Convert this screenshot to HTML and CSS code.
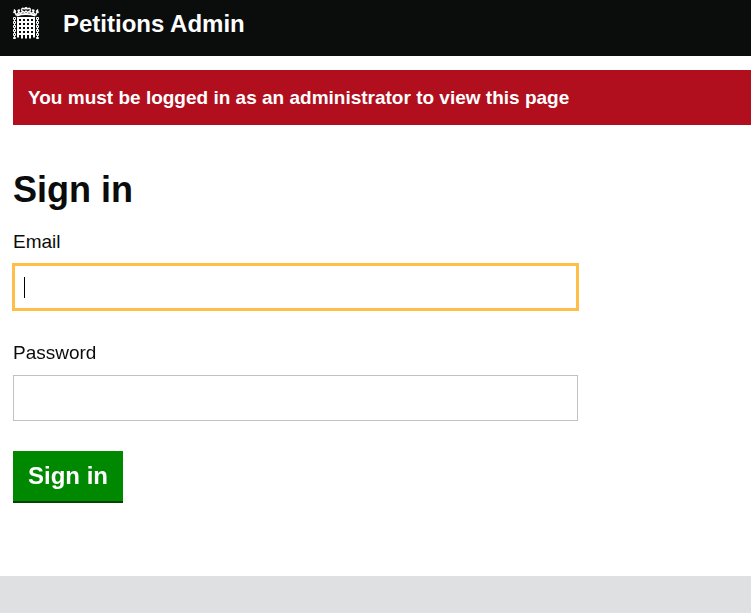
FILE: index.html
```html
<!DOCTYPE html>
<html lang="en">
<head>
<meta charset="utf-8">
<title>Sign in - Petitions Admin</title>
<link rel="stylesheet" href="styles.css">
</head>
<body>
<header class="site-header">
  <svg class="logo" viewBox="0 0 26 32" aria-hidden="true">
    <path fill="#fff" fill-rule="evenodd" d="M4 10h18v20l-1 1-1-1v-2h-2v3l-1 1-1-1v-3h-2v3l-1 1-1-1v-3h-2v3l-1 1-1-1v-3H6v2l-1 1-1-1z
      M6 12v2h2v-2zM10 12v2h2v-2zM14 12v2h2v-2zM18 12v2h2v-2z
      M6 16v2h2v-2zM10 16v2h2v-2zM14 16v2h2v-2zM18 16v2h2v-2z
      M6 20v2h2v-2zM10 20v2h2v-2zM14 20v2h2v-2zM18 20v2h2v-2z
      M6 24v2h2v-2zM10 24v2h2v-2zM14 24v2h2v-2zM18 24v2h2v-2z"/>
    <g fill="none" stroke="#fff">
      <path d="M.5 10.500h2v2h-2zM.5 14.500h2v2h-2zM.5 18.500h2v2h-2zM.5 22.500h2v2h-2zM.5 26.500h2v2h-2zM.5 30.500h2v1h-2zM1.500 13v1M1.500 17v1M1.500 21v1M1.500 25v1M1.500 29v1"/>
      <path d="M23.500 10.500h2v2h-2zM23.500 14.500h2v2h-2zM23.500 18.500h2v2h-2zM23.500 22.500h2v2h-2zM23.500 26.500h2v2h-2zM23.500 30.500h2v1h-2zM24.500 13v1M24.500 17v1M24.500 21v1M24.500 25v1M24.500 29v1"/>
      <path stroke-width="2.200" d="M3.500 8.500Q13 5.500 22.500 8.500"/>
      <path stroke-width="1.500" d="M3.500 8.500L1.500 4.500M22.500 8.500l2-4M.3 5.500l2.700-1.500M25.700 5.500L23 4M1 2.500l1.500 2M25 2.500l-1.500 2"/>
      <path stroke-width="1.500" d="M3.500 7.500L6 5.500l1.500 1L10 4.500l1.500 1L13 4l1.500 1.500 1.500-1 2.500 2 1.500-1 2.500 2"/>
      <path stroke-width="1.500" d="M6 5.500L5.300 2.500M20 5.500l.7-3M4.500 4l2.500-1M21.500 4L19 3M13 0v2.500M11.500 1.200h3M8.500 2Q10.500 .5 11.500 2.500M17.500 2Q15.500 .5 14.500 2.500M8.500 2l.5 2.500M17.500 2L17 4.500"/>
    </g>
  </svg>
  <span class="site-title">Petitions Admin</span>
</header>
<main class="content">
  <p class="notice" role="alert">You must be logged in as an administrator to view this page</p>
  <h1>Sign in</h1>
  <form>
    <div class="field">
      <label for="email">Email</label>
      <input class="active" id="email" type="email" autofocus>
    </div>
    <div class="field">
      <label for="password">Password</label>
      <input id="password" type="password">
    </div>
    <button type="submit">Sign in</button>
  </form>
</main>
<footer class="site-footer"></footer>
</body>
</html>
```
FILE: styles.css
```css
* { box-sizing: border-box; }
html { height: 100%; }
body {
  display: flex;
  flex-direction: column;
  min-height: 100%;
  margin: 0;
  background: #fff;
  color: #0b0c0c;
  font: 19px/25px "Liberation Sans", Arial, sans-serif;
}
.site-header {
  display: flex;
  align-items: flex-start;
  gap: 24px;
  padding: 7px 13px 16px;
  background: #0b0c0c;
  color: #fff;
}
.logo { width: 26px; height: 32px; }
.site-title { font-size: 24px; line-height: 33px; font-weight: bold; }
.content { padding: 14px 0 73px 13px; }
.notice {
  margin: 0 0 40px;
  padding: 15px;
  background: #b10e1e;
  color: #fff;
  font-weight: bold;
}
h1 { margin: 0 0 14px; font-size: 36px; line-height: 50px; }
.field { margin-bottom: 30px; }
label { display: block; margin-bottom: 10px; }
input {
  display: block;
  width: 100%;
  max-width: 565px;
  height: 46px;
  padding: 10px;
  border: 1px solid #bfc1c3;
  border-radius: 0;
  background: #fff;
  color: #0b0c0c;
  font: inherit;
}
input:focus,
input.active {
  outline: 3px solid #ffbf47;
  outline-offset: -2px;
}
input.active {
  background: linear-gradient(#000, #000) 10px center / 1px 21px no-repeat #fff;
  caret-color: transparent;
}
button {
  display: block;
  padding: 10px 15px;
  border: 0;
  border-bottom: 2px solid #004500;
  background: #008800;
  color: #fff;
  font: bold 24px/30px "Liberation Sans", Arial, sans-serif;
}
.site-footer { flex: 1; min-height: 37px; background: #dee0e2; }
```
